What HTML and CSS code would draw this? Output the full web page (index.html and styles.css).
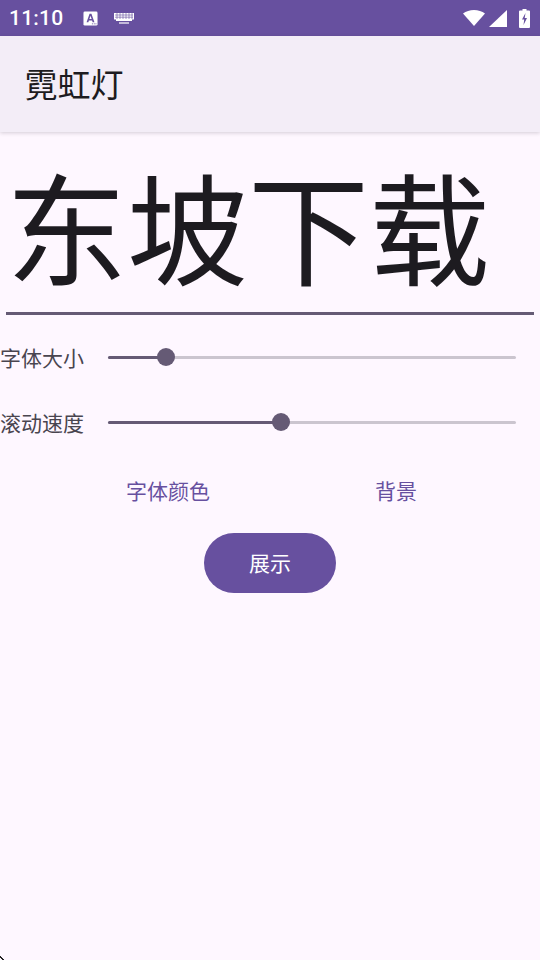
FILE: index.html
```html
<!DOCTYPE html>
<html lang="zh-CN">
<head>
<meta charset="utf-8">
<title>霓虹灯</title>
<link rel="stylesheet" href="styles.css">
</head>
<body>
<div class="screen">
  <div class="status">
    <span class="time">11:10</span>
    <svg class="ic-a" viewBox="0 0 16 16"><rect x="0.500" y="0.500" width="15" height="15" rx="1.500" fill="#fff"/><path d="M3.800 12 7 3h2l3.200 9h-1.900l-.6-1.900H6.300L5.700 12zM6.800 8.600h2.400L8 5z" fill="#67509f"/><rect x="9.500" y="13.200" width="1" height="1" fill="#67509f"/><rect x="11.500" y="13.200" width="1" height="1" fill="#67509f"/><rect x="13.300" y="13.200" width="1" height="1" fill="#67509f"/></svg>
    <svg class="ic-k" viewBox="0 0 20 12"><path d="M0 1h20v6.500h-2V9H2V7.500H0z" fill="#fff"/><path d="M1 3h18M1 5.200h18M3 1v6M6 1v6M9 1v6M12 1v6M15 1v6M18 1v6" stroke="#67509f" stroke-width=".6" fill="none"/><rect x="5" y="10.400" width="10" height="1.200" fill="#fff"/></svg>
    <span class="spacer"></span>
    <svg class="ic-w" viewBox="0 0 22 16"><path d="M0 3.600C3 1.200 6.800 0 11 0s8 1.200 11 3.600L11 16z" fill="#fff"/></svg>
    <svg class="ic-s" viewBox="0 0 18 17"><path d="M18 0v17H0z" fill="#fff"/></svg>
    <svg class="ic-b" viewBox="0 0 11 19"><path d="M3.500 0h4v1.600H10a1 1 0 0 1 1 1V18a1 1 0 0 1-1 1H1a1 1 0 0 1-1-1V2.600a1 1 0 0 1 1-1h2.500z" fill="#fff"/><path d="M6.500 4 3 10.500h2.200L4.500 16 8 9H5.700z" fill="#67509f"/></svg>
  </div>
  <header class="appbar"><h1 class="title">霓虹灯</h1></header>
  <main class="content">
    <div class="preview">东坡下载</div>
    <div class="setting setting-first">
      <span class="label">字体大小</span>
      <div class="slider"><div class="fill fill-size"></div><div class="thumb"></div></div>
    </div>
    <div class="setting setting-second">
      <span class="label">滚动速度</span>
      <div class="slider"><div class="fill fill-speed"></div><div class="thumb"></div></div>
    </div>
    <div class="links">
      <span class="link">字体颜色</span>
      <span class="link">背景</span>
    </div>
    <div class="actions"><button class="show">展示</button></div>
  </main>
  <svg class="corner" viewBox="0 0 5 4"><path d="M0 0h1v1h1v1h1v1h1v1H2V3H1V2H0z" fill="#222"/></svg>
</div>
</body>
</html>
```
FILE: styles.css
```css
* { box-sizing: border-box; }
html, body { margin: 0; padding: 0; }
body {
  width: 540px;
  height: 960px;
  overflow: hidden;
  background: #fef7ff;
  font-family: "Roboto", "Noto Sans CJK SC", sans-serif;
}
.screen { display: flex; flex-direction: column; height: 960px; position: relative; }
.status {
  height: 36px;
  background: #67509f;
  display: flex;
  align-items: center;
  padding: 0 9px;
  flex: none;
}
.time { color: #fff; font-size: 21px; font-weight: 500; letter-spacing: .2px; width: 74px; }
.ic-a { width: 15px; height: 15px; margin-right: 16px; flex: none; }
.ic-k { width: 20px; height: 12px; flex: none; }
.spacer { flex: 1; }
.ic-w { width: 22px; height: 16px; flex: none; margin-right: 4px; }
.ic-s { width: 18px; height: 17px; flex: none; margin-right: 12px; }
.ic-b { width: 11px; height: 19px; flex: none; margin-right: 1px; }
.appbar {
  height: 96px;
  flex: none;
  background: #f3edf7;
  display: flex;
  align-items: center;
  padding: 2px 25px 0 24.500px;
  box-shadow: 0 1px 4px rgba(60, 50, 70, .22);
  position: relative;
}
.title { margin: 0; font-size: 33px; font-weight: 400; color: #1d1b20; line-height: 1; }
.content { flex: 1; display: flex; flex-direction: column; }
.preview {
  margin: 0 6px;
  height: 183px;
  border-bottom: 3px solid #655a75;
  color: #1d1b20;
  font-size: 121px;
  line-height: 206px;
  padding: 0;
  white-space: nowrap;
}
.setting { display: flex; align-items: center; height: 40px; }
.setting-first { margin-top: 22px; }
.setting-second { margin-top: 25px; }
.label { width: 108px; font-size: 21px; color: #49454f; flex: none; position: relative; }
.slider { width: 408px; height: 3px; background: #cbc5cf; position: relative; border-radius: 2px; display: flex; }
.fill { height: 3px; background: #655a75; border-radius: 2px; position: relative; }
.fill-size { width: 58px; }
.fill-speed { width: 173px; }
.thumb {
  width: 18px; height: 18px; border-radius: 50%; background: #655a75;
  margin: -7.500px 0 0 -9px; flex: none; position: relative;
}
.links { display: flex; margin-top: 28px; height: 40px; align-items: center; }
.link { color: #67509f; font-size: 21px; text-align: center; }
.link:first-child { width: 336px; }
.link:last-child { width: 120px; }
.actions { display: flex; justify-content: center; margin-top: 23px; }
.show {
  width: 132px; height: 60px; border: 0; border-radius: 30px; padding: 0 0 2px;
  background: #67509f; color: #fff; font: inherit; font-size: 21px;
}
.corner { position: absolute; left: 0; bottom: 0; width: 5px; height: 4px; }
```
